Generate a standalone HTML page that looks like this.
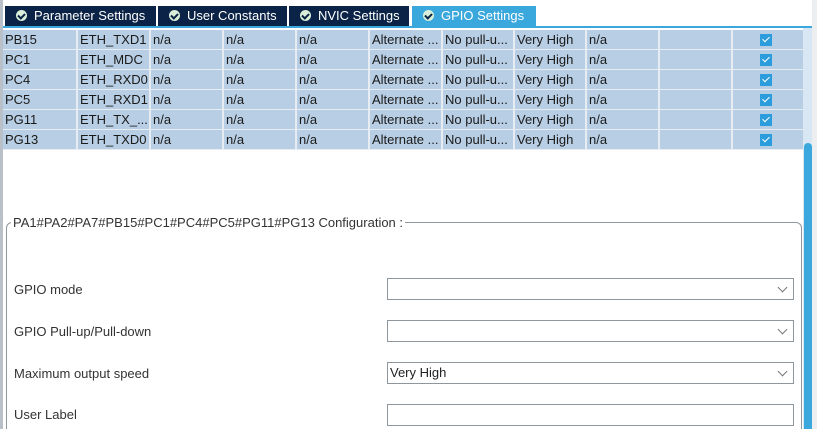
<html style="overflow:hidden;width:817px;height:429px"><head><style>
body{margin:0;width:817px;height:429px;overflow:hidden;background:#fff;font-family:"Liberation Sans",sans-serif;font-size:13px;position:relative}
.a{position:absolute}
.tab{position:absolute;top:6px;height:20px;background:#0a2346;color:#fff;font-size:13px;line-height:20px;box-sizing:border-box;padding-left:11px}
.tab i{display:inline-block;width:11px;height:11px;border-radius:50%;vertical-align:-1px;margin-right:7px;position:relative;background:#d9efd9}
.tab i:after{content:"";position:absolute;left:3px;top:2px;width:3px;height:5px;border:solid #0a2346;border-width:0 2px 2px 0;transform:rotate(45deg)}
.row{position:absolute;left:3px;width:800px;height:19px;background:#b8cee4;border-bottom:1px solid #e6ecf2}
.c{position:absolute;top:0;height:19px;line-height:20px;padding-left:2px;color:#1a1a1a;border-left:2px solid #e6ecf2;box-sizing:border-box;white-space:nowrap;overflow:hidden}
.cb{position:absolute;left:757px;top:4px;width:12px;height:12px;background:#2b9ddc}
.cb:after{content:"";position:absolute;left:4px;top:1px;width:3px;height:6px;border:solid #fff;border-width:0 1.5px 1.5px 0;transform:rotate(45deg)}
.lbl{position:absolute;left:14px;color:#333}
.inp{position:absolute;left:387px;width:407px;height:22px;border:1px solid #8f979e;box-sizing:border-box;padding-left:2px;line-height:20px;color:#222}
.inp.s:after{content:"";position:absolute;right:7px;top:5px;width:6px;height:6px;border:solid #777;border-width:0 1px 1px 0;transform:rotate(45deg)}
</style></head><body>
<div class="a" style="left:0;top:0;width:3px;height:429px;background:#b9c0c7"></div>
<div class="a" style="left:812px;top:0;width:5px;height:429px;background:#eceef0"></div>
<div class="tab" style="left:5px;width:151px"><i></i>Parameter Settings</div>
<div class="tab" style="left:158px;width:129px"><i></i>User Constants</div>
<div class="tab" style="left:289px;width:120px"><i></i>NVIC Settings</div>
<div class="tab" style="left:412px;width:124px;background:#3aa8dc"><i></i>GPIO Settings</div>
<div class="a" style="left:3px;top:26px;width:809px;height:2px;background:#3aa8dc"></div>
<div class="a" style="left:803px;top:28px;width:9px;height:401px;background:#d9e6f3"></div>
<div class="a" style="left:804px;top:143px;width:8px;height:286px;background:#3aa8dc;border-radius:4px 4px 0 0"></div>
<div id="t"></div>
<script>
var d=[["PB15","ETH_TXD1"],["PC1","ETH_MDC"],["PC4","ETH_RXD0"],["PC5","ETH_RXD1"],["PG11","ETH_TX_..."],["PG13","ETH_TXD0"]];
var xs=[0,73,146,219,292,365,438,510,582,655,728];var h="";
d.forEach(function(r,i){var v=[r[0],r[1],"n/a","n/a","n/a","Alternate ...","No pull-u...","Very High","n/a","",""];
h+='<div class="row" style="top:'+(30+i*20)+'px">';
for(var j=0;j<11;j++){var w=(j<10?xs[j+1]:800)-xs[j];h+='<div class="c" style="left:'+xs[j]+'px;width:'+w+'px;'+(j==0?'border-left:0;':'')+'">'+v[j]+'</div>';}
h+='<div class="cb"></div></div>';});
document.getElementById("t").innerHTML=h;
</script>
<div class="a" style="left:6px;top:222px;width:796px;height:207px;border:1px solid #8f979e;border-bottom:0;border-radius:6px 6px 0 0;box-sizing:border-box"></div>
<div class="a" style="left:11px;top:215px;background:#fff;padding:0 2px;color:#333;line-height:16px">PA1#PA2#PA7#PB15#PC1#PC4#PC5#PG11#PG13 Configuration :</div>
<div class="lbl" style="top:282px">GPIO mode</div>
<div class="inp s" style="top:278px"></div>
<div class="lbl" style="top:324px">GPIO Pull-up/Pull-down</div>
<div class="inp s" style="top:320px"></div>
<div class="lbl" style="top:366px">Maximum output speed</div>
<div class="inp s" style="top:362px">Very High</div>
<div class="lbl" style="top:407px">User Label</div>
<div class="inp" style="top:404px"></div>
</body></html>
